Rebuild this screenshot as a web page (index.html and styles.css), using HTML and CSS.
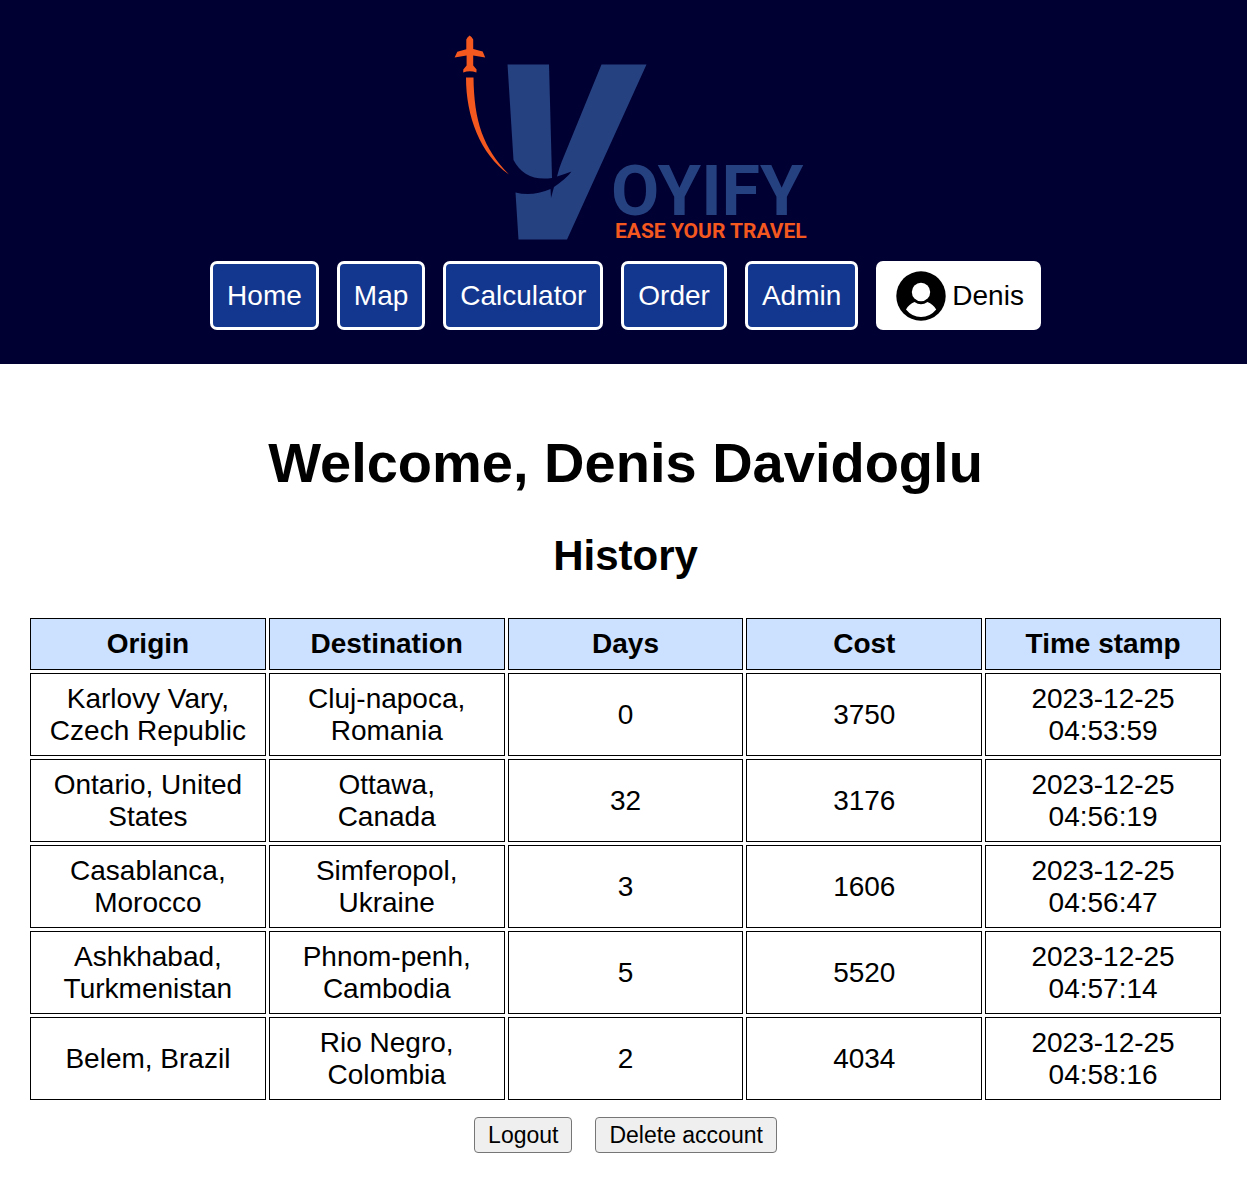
FILE: index.html
```html
<!DOCTYPE html>
<html lang="en">
<head>
<meta charset="utf-8">
<meta name="viewport" content="width=device-width, initial-scale=1">
<title>Voyify</title>
<link rel="stylesheet" href="styles.css">
</head>
<body>
<header class="header">
  <svg class="logo" viewBox="440 32 371 212" role="img" aria-label="Voyify, ease your travel">
    <path class="logo-orange" d="M469.700 35.500q2.300 1.500 3.500 4v9.500l9.500 2.400 2.500 6-12-2v10.200l3.400 4-.2 3q-6.600-2.800-13.200 0l.1-3 3.300-4V55.400l-12 2 2.700-5.600 9-2.600V39.500q1.100-2.500 3.400-4z"/>
    <path class="logo-orange" d="M466 77.500h7.500C474 121 483 148 509 174.500C480 154 466 116 466 77.500z"/>
    <path class="logo-blue" d="M507.500 64.500H549L552 178Q525 182 513.500 160z"/>
    <path class="logo-blue" d="M601.500 64.500H646.500L567 239.500H518.500L515.500 192.500Q532 197 550.500 189L551 198L554 187Q567 178 571.500 171.500Q565 174 557 176.500Q559 168 562 161z"/>
    <text class="logo-name" x="611" y="215">OYIFY</text>
    <text class="logo-tagline" x="615" y="238">EASE YOUR TRAVEL</text>
  </svg>
  <nav class="nav">
    <a class="nav-link" href="#">Home</a>
    <a class="nav-link" href="#">Map</a>
    <a class="nav-link" href="#">Calculator</a>
    <a class="nav-link" href="#">Order</a>
    <a class="nav-link" href="#">Admin</a>
    <a class="nav-link nav-user" href="#">
      <svg class="avatar" viewBox="0 0 50 50" aria-hidden="true">
        <circle cx="25" cy="25" r="24.700"/>
        <circle class="avatar-face" cx="25" cy="21" r="9.200"/>
        <path class="avatar-face" d="M10 38.500Q13 33 18.500 31Q25 35.500 31.500 31Q37 33 40.200 38.500Q34 46 25 46Q16 46 10 38.500z"/>
      </svg>
      Denis
    </a>
  </nav>
</header>
<main class="main">
  <h1 class="title">Welcome, Denis Davidoglu</h1>
  <h2 class="subtitle">History</h2>
  <table class="history">
    <thead>
      <tr><th>Origin</th><th>Destination</th><th>Days</th><th>Cost</th><th>Time stamp</th></tr>
    </thead>
    <tbody>
      <tr><td>Karlovy Vary, Czech Republic</td><td>Cluj-napoca, Romania</td><td>0</td><td>3750</td><td>2023-12-25 04:53:59</td></tr>
      <tr><td>Ontario, United States</td><td>Ottawa, Canada</td><td>32</td><td>3176</td><td>2023-12-25 04:56:19</td></tr>
      <tr><td>Casablanca, Morocco</td><td>Simferopol, Ukraine</td><td>3</td><td>1606</td><td>2023-12-25 04:56:47</td></tr>
      <tr><td>Ashkhabad, Turkmenistan</td><td>Phnom-penh, Cambodia</td><td>5</td><td>5520</td><td>2023-12-25 04:57:14</td></tr>
      <tr><td>Belem, Brazil</td><td>Rio Negro, Colombia</td><td>2</td><td>4034</td><td>2023-12-25 04:58:16</td></tr>
    </tbody>
  </table>
  <div class="actions">
    <button class="button" type="button">Logout</button>
    <button class="button" type="button">Delete account</button>
  </div>
</main>
</body>
</html>
```
FILE: styles.css
```css
* {
  box-sizing: border-box;
}

body {
  margin: 0;
  background: #fff;
  color: #000;
  font-family: "Liberation Sans", Arial, sans-serif;
  font-size: 28px;
  line-height: 32px;
}

.header {
  display: flex;
  flex-direction: column;
  align-items: center;
  gap: 17px;
  padding: 32px 24px 34px 28px;
  background: #000033;
}

.logo {
  width: 371px;
  max-width: 100%;
}

.logo-orange {
  fill: #f4581f;
}

.logo-blue,
.logo-name {
  fill: #264180;
}

.logo-name,
.logo-tagline {
  font-family: Roboto, "Liberation Sans", sans-serif;
  font-weight: bold;
}

.logo-name {
  font-size: 70px;
}

.logo-tagline {
  fill: #f4581f;
  font-size: 21px;
}

.nav {
  display: flex;
  flex-wrap: wrap;
  justify-content: center;
  gap: 18px;
}

.nav-link {
  display: flex;
  align-items: center;
  min-height: 69px;
  padding: 0 14px;
  border: 3px solid #fff;
  border-radius: 7px;
  background: #13378f;
  color: #fff;
  text-decoration: none;
}

.nav-user {
  gap: 6px;
  padding-left: 17px;
  background: #fff;
  color: #000;
}

.avatar {
  width: 50px;
  height: 50px;
}

.avatar-face {
  fill: #fff;
}

.main {
  padding: 67px 23px 26px 27px;
  text-align: center;
}

.title {
  margin: 0;
  font-size: 56px;
  line-height: 64px;
}

.subtitle {
  margin: 37px 0 35px;
  font-size: 42px;
  line-height: 48px;
}

.history {
  width: 100%;
  table-layout: fixed;
  border-spacing: 3px;
}

.history th,
.history td {
  padding: 9px 18px;
  border: 1px solid #000;
}

.history th {
  background: #cce0ff;
}

.history td {
  padding-bottom: 8px;
}

.actions {
  display: flex;
  justify-content: center;
  gap: 23px;
  margin-top: 14px;
}

.button {
  padding: 3px 13px;
  border: 1px solid #767676;
  border-radius: 4px;
  background: #efefef;
  color: #000;
  font-family: inherit;
  font-size: 23px;
  line-height: 28px;
}
```
